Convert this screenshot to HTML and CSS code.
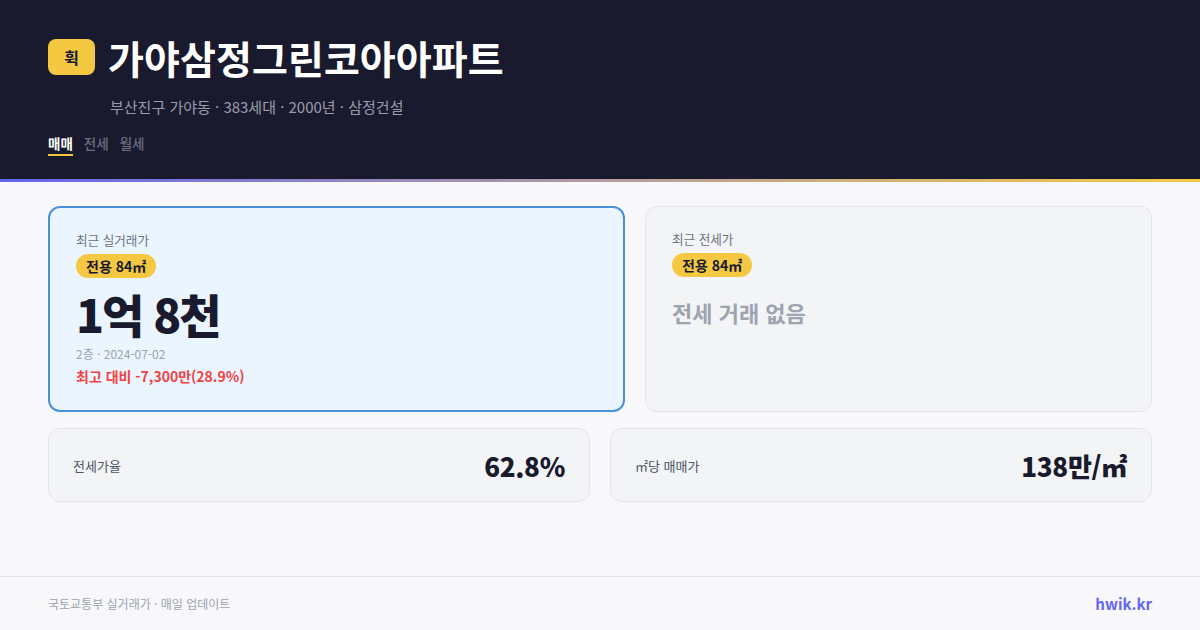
FILE: index.html
```html
<!DOCTYPE html>
<html lang="ko">
<head>
<meta charset="utf-8">
<title>가야삼정그린코아아파트</title>
<link rel="stylesheet" href="styles.css">
</head>
<body>
<div class="page">
  <header class="header">
    <div class="title-row">
      <div class="logo">휙</div>
      <h1 class="title">가야삼정그린코아아파트</h1>
    </div>
    <div class="subtitle">부산진구 가야동 · 383세대 · 2000년 · 삼정건설</div>
    <nav class="tabs">
      <span class="tab active">매매</span>
      <span class="tab">전세</span>
      <span class="tab">월세</span>
    </nav>
  </header>
  <div class="accent"></div>
  <main class="main">
    <section class="top-row">
      <div class="card card-primary">
        <div class="card-label">최근 실거래가</div>
        <div class="pill">전용 84㎡</div>
        <div class="price">1억 8천</div>
        <div class="meta">2층 · 2024-07-02</div>
        <div class="diff">최고 대비 -7,300만(28.9%)</div>
      </div>
      <div class="card card-muted">
        <div class="card-label">최근 전세가</div>
        <div class="pill">전용 84㎡</div>
        <div class="empty">전세 거래 없음</div>
      </div>
    </section>
    <section class="bottom-row">
      <div class="stat">
        <span class="stat-label">전세가율</span>
        <span class="stat-value">62.8%</span>
      </div>
      <div class="stat">
        <span class="stat-label">㎡당 매매가</span>
        <span class="stat-value">138만/㎡</span>
      </div>
    </section>
  </main>
  <footer class="footer">
    <span class="source">국토교통부 실거래가 · 매일 업데이트</span>
    <span class="brand">hwik.kr</span>
  </footer>
</div>
</body>
</html>
```

FILE: styles.css
```css
* { box-sizing: border-box; margin: 0; padding: 0; }

html, body {
  width: 1200px;
  height: 630px;
  overflow: hidden;
}

body {
  background: #f8f8fa;
  font-family: "Noto Sans CJK KR", "Noto Sans", sans-serif;
  color: #1a1a2e;
}

.page {
  display: flex;
  flex-direction: column;
  height: 630px;
}

.header {
  background: #1a1a2e;
  height: 179px;
  padding: 33px 48px 0;
}

.title-row {
  display: flex;
  align-items: center;
  gap: 13px;
  height: 48px;
}

.logo {
  width: 47px;
  height: 36px;
  border-radius: 8px;
  background: #f5c842;
  color: #1a1a2e;
  font-size: 16px;
  font-weight: 700;
  display: flex;
  align-items: center;
  justify-content: center;
}

.title {
  color: #ffffff;
  font-size: 39px;
  font-weight: 700;
  line-height: 48px;
  letter-spacing: 0.1px;
}

.subtitle {
  margin: 15px 0 0 62px;
  font-size: 15px;
  line-height: 22px;
  color: #9a9cab;
}

.tabs {
  display: flex;
  gap: 11px;
  margin-top: 15px;
}

.tab {
  font-size: 13.5px;
  line-height: 20px;
  color: #6b6e80;
  font-weight: 500;
  padding-bottom: 1px;
  border-bottom: 2px solid transparent;
}

.tab.active {
  color: #ffffff;
  font-weight: 700;
  border-bottom-color: #f5c842;
}

.accent {
  height: 3px;
  background: linear-gradient(90deg, #6366f1 0%, #b39ba0 50%, #f5c842 100%);
}

.main {
  flex: 1;
  padding: 24px 48px 0;
  display: flex;
  flex-direction: column;
  gap: 18px;
}

.top-row {
  display: grid;
  grid-template-columns: 577fr 507fr;
  gap: 20px;
  height: 204px;
}

.card {
  border-radius: 12px;
  display: flex;
  flex-direction: column;
  align-items: flex-start;
}

.card-primary {
  background: #ebf5ff;
  border: 2px solid #4a90d9;
  padding: 24px 26px;
}

.card-muted {
  background: #f3f4f6;
  border: 1px solid #e3e5e9;
  padding: 24px 26px;
}

.card-label {
  font-size: 12.6px;
  line-height: 16px;
  color: #6b7280;
}

.pill {
  margin-top: 6px;
  height: 24px;
  line-height: 24px;
  padding: 0 10px;
  border-radius: 12px;
  background: #f5c842;
  color: #1a1a2e;
  font-size: 14px;
  font-weight: 700;
}

.price {
  margin-top: 8px;
  font-size: 46px;
  line-height: 55px;
  font-weight: 800;
  letter-spacing: -2px;
  color: #1a1a2e;
}

.meta {
  margin-top: 5px;
  font-size: 12px;
  line-height: 16px;
  color: #9ca3af;
}

.diff {
  margin-top: 4px;
  font-size: 14px;
  line-height: 20px;
  font-weight: 600;
  color: #ef4444;
}

.empty {
  margin-top: 20px;
  font-size: 22px;
  line-height: 30px;
  font-weight: 700;
  color: #9ea3b0;
}

.bottom-row {
  display: grid;
  grid-template-columns: 1fr 1fr;
  gap: 20px;
}

.stat {
  height: 74px;
  background: #f3f4f6;
  border: 1px solid #e3e5e9;
  border-radius: 12px;
  padding: 0 24px;
  display: flex;
  align-items: center;
  justify-content: space-between;
}

.stat-label {
  font-size: 13px;
  color: #4b5563;
}

.stat-value {
  font-size: 26px;
  font-weight: 800;
  letter-spacing: -0.3px;
  color: #1a1a2e;
}

.footer {
  height: 54px;
  border-top: 1px solid #e5e7eb;
  padding: 0 48px;
  display: flex;
  align-items: center;
  justify-content: space-between;
}

.source {
  font-size: 12px;
  color: #9ca3af;
}

.brand {
  font-size: 15px;
  font-weight: 700;
  color: #6366f1;
}
```
